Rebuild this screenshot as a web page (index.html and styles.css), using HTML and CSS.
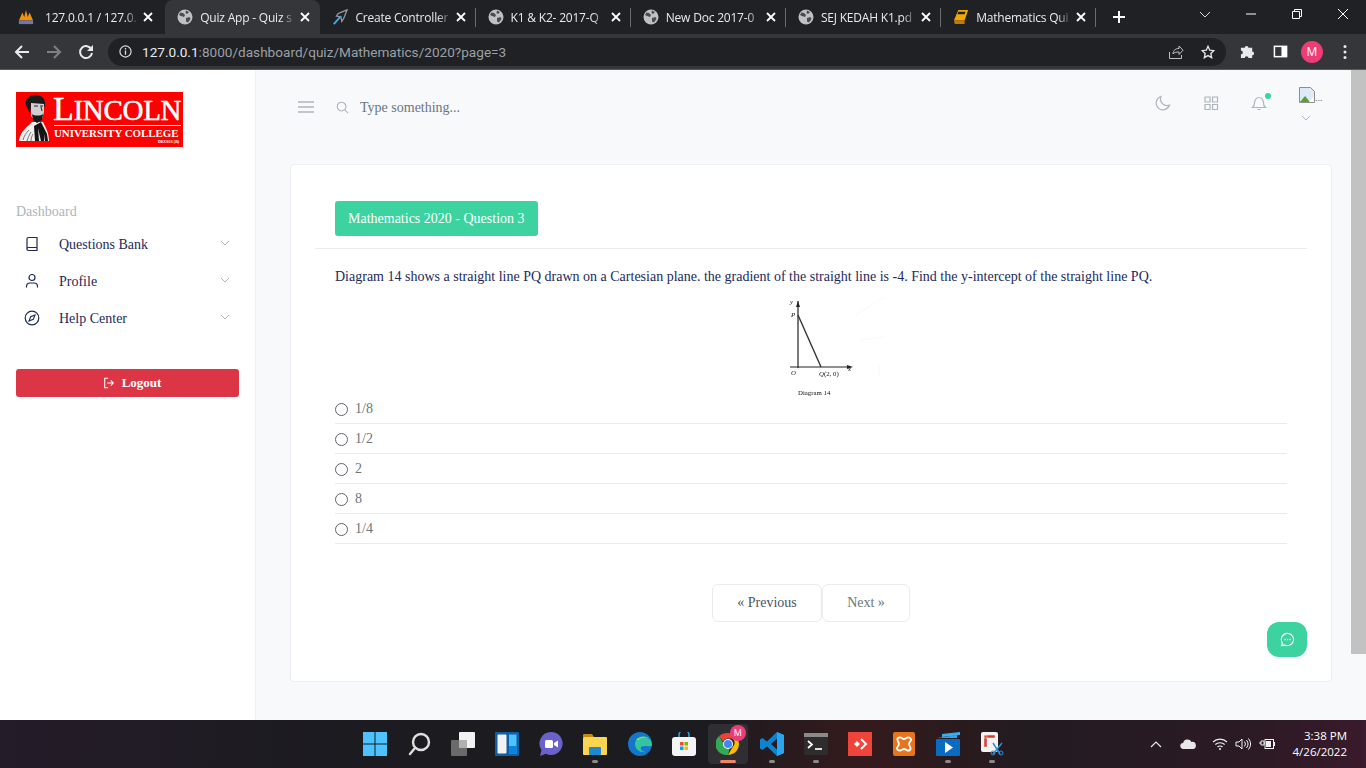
FILE: index.html
```html
<!DOCTYPE html>
<html lang="en">
<head>
	<title>Quiz App - Quiz</title>
	<meta charset="UTF-8">
	<link rel="stylesheet" href="styles.css">
</head>
<body>

<svg class="defs" width="0" height="0">
	<symbol id="globe" viewBox="0 0 16 16">
		<circle cx="8" cy="8" r="7.500" fill="#bdc1c6"/>
		<path d="M3.500 3.500l2.500.5 2 2-1 2-3-1-2-1zM9 9l3.500-1 1 2-2.500 3.500-2-1zM9 1.500l3 1.500-2 2-1.500-1z" fill="#4a4b4f"/>
	</symbol>
	<symbol id="close" viewBox="0 0 10 10">
		<path d="M1 1l8 8M9 1l-8 8" stroke="#fff" stroke-width="1.800" fill="none"/>
	</symbol>
	<symbol id="chev" viewBox="0 0 10 6">
		<path d="M1 1l4 4 4-4" stroke="#adb5bd" stroke-width="1" fill="none"/>
	</symbol>
</svg>

<header class="tabstrip">
	<div class="tab first">
		<svg class="tab-icon" viewBox="0 0 18 18"><path d="M1 13L5 4l2 5 2-8 2 8 2-5 4 9z" fill="#f29111"/><rect x="1" y="13" width="16" height="4" fill="#6c78af"/></svg>
		<span class="tab-title">127.0.0.1 / 127.0.</span>
		<svg class="tab-close"><use href="#close"/></svg>
	</div>
	<div class="tab active">
		<svg class="tab-icon"><use href="#globe"/></svg>
		<span class="tab-title">Quiz App - Quiz s</span>
		<svg class="tab-close"><use href="#close"/></svg>
	</div>
	<div class="tab sep">
		<svg class="tab-icon" viewBox="0 0 18 18"><path d="M17 1L7 5 5 8l5 1 1 5 2-3z" fill="none" stroke="#9aa0a6" stroke-width="1.400"/><path d="M10 8L2 17" stroke="#4aa8e8" stroke-width="2"/></svg>
		<span class="tab-title">Create Controller</span>
		<svg class="tab-close"><use href="#close"/></svg>
	</div>
	<div class="tab sep">
		<svg class="tab-icon"><use href="#globe"/></svg>
		<span class="tab-title">K1 &amp; K2- 2017-Q</span>
		<svg class="tab-close"><use href="#close"/></svg>
	</div>
	<div class="tab sep">
		<svg class="tab-icon"><use href="#globe"/></svg>
		<span class="tab-title">New Doc 2017-0</span>
		<svg class="tab-close"><use href="#close"/></svg>
	</div>
	<div class="tab sep">
		<svg class="tab-icon"><use href="#globe"/></svg>
		<span class="tab-title">SEJ KEDAH K1.pd</span>
		<svg class="tab-close"><use href="#close"/></svg>
	</div>
	<div class="tab sep">
		<svg class="tab-icon" viewBox="0 0 18 18"><path d="M6 1h11l-4 12H1z" fill="#f5a800"/><path d="M6 3h8l-1 3H5z" fill="#202124"/><path d="M1 13h12v4H2z" fill="#c47a00"/></svg>
		<span class="tab-title">Mathematics Qui</span>
		<svg class="tab-close"><use href="#close"/></svg>
	</div>
	<svg class="new-tab" viewBox="0 0 14 14"><path d="M7 1v12M1 7h12" stroke="#fff" stroke-width="2"/></svg>
	<div class="win-controls">
		<svg viewBox="0 0 12 12"><path d="M1 4l5 5 5-5" stroke="#dadce0" fill="none"/></svg>
		<svg viewBox="0 0 12 12"><path d="M1 6h10" stroke="#fff"/></svg>
		<svg viewBox="0 0 12 12"><path d="M1.500 3.500h7v7h-7zM3.500 3V1.500h7v7H9" stroke="#fff" fill="none"/></svg>
		<svg viewBox="0 0 12 12"><path d="M1 1l10 10M11 1L1 11" stroke="#fff" fill="none"/></svg>
	</div>
</header>

<div class="toolbar">
	<svg class="tool" viewBox="0 0 16 16"><path d="M15 8H2M8 2L2 8l6 6" stroke="#e8eaed" stroke-width="2" fill="none"/></svg>
	<svg class="tool" viewBox="0 0 16 16"><path d="M1 8h13M8 2l6 6-6 6" stroke="#7d8084" stroke-width="2" fill="none"/></svg>
	<svg class="tool" viewBox="0 0 16 16"><path d="M13.500 5.500A6 6 0 1 0 14 9" stroke="#e8eaed" stroke-width="2" fill="none"/><path d="M15 1v6H9z" fill="#e8eaed"/></svg>
	<div class="omnibox">
		<svg class="info" viewBox="0 0 14 14"><circle cx="7" cy="7" r="6" stroke="#dadce0" stroke-width="1.300" fill="none"/><path d="M7 6v4.500M7 3.300v1.500" stroke="#dadce0" stroke-width="1.400"/></svg>
		<span class="url"><b>127.0.0.1</b>:8000/dashboard/quiz/Mathematics/2020?page=3</span>
		<svg class="omni-icon" viewBox="0 0 16 16"><path d="M1.500 8v6.500h12V11M5 10c0-4 3-5.500 6-5.500V2l4 4.200-4 4.300V8c-3 0-5 .5-6 2z" stroke="#bdc1c6" fill="none"/></svg>
		<svg class="omni-star" viewBox="0 0 16 16"><path d="M8 1.500l2 4.500 4.700.5-3.500 3.200 1 4.800L8 12.100l-4.200 2.400 1-4.800L1.300 6.500 6 6z" stroke="#e8eaed" stroke-width="1.500" fill="none"/></svg>
	</div>
	<svg class="ext" viewBox="0 0 16 16"><path d="M1 4h4a2 2 0 0 1 4 0h4v4a2 2 0 0 1 0 4v3H9a2 2 0 0 0-4 0H1v-4a2 2 0 0 0 0-4z" fill="#e8eaed"/></svg>
	<svg class="panel" viewBox="0 0 16 16"><rect x="1.500" y="2.500" width="13" height="11" stroke="#fff" stroke-width="1.600" fill="none"/><rect x="9" y="2.500" width="5.500" height="11" fill="#fff"/></svg>
	<span class="avatar">M</span>
	<svg class="dots" viewBox="0 0 4 16"><circle cx="2" cy="2.500" r="1.500" fill="#e8eaed"/><circle cx="2" cy="8" r="1.500" fill="#e8eaed"/><circle cx="2" cy="13.500" r="1.500" fill="#e8eaed"/></svg>
</div>

<div class="viewport">
	<aside class="sidebar">
		<div class="logo">
			<svg class="bust" viewBox="0 0 32 48">
				<path d="M0 47C1 40 4 36 10 31l3-3h11c3 6 6 11 6 19z" fill="#f0f0f0"/>
				<path d="M4 46c1-4 3-7 6-10M8 47c1-3 2-6 4-9M12 47c0-3 1-5 2-7" stroke="#777" stroke-width="1" fill="none"/>
				<path d="M15 32l7-4 6 12 1 7H16z" fill="#141414"/>
				<path d="M19 34l3 13h-2zM25 40l1 7h-1z" fill="#ddd"/>
				<path d="M7 11C5 4 12 0 18 1c6 1 9 5 8 11l-2 3-12-3-1 8z" fill="#1a1a1a"/>
				<path d="M12 9l13 1v8l-2 7-7 2-4-5z" fill="#d0d0d0"/>
				<path d="M13 20c2 2 9 2 11 0l-1 6-5 3-4-3z" fill="#1a1a1a"/>
				<path d="M15 12h4M21 12h3M22 13l1 4" stroke="#222" stroke-width="1" fill="none"/>
			</svg>
			<div class="logo-text">
				<div class="logo-name">L<span>INCOLN</span></div>
				<div class="logo-sub">UNIVERSITY COLLEGE</div>
				<div class="logo-code">DKU016 (B)</div>
			</div>
		</div>

		<p class="side-label">Dashboard</p>
		<ul class="side-menu">
			<li>
				<svg class="side-icon" viewBox="0 0 16 16"><path d="M3 14V3a1.500 1.500 0 0 1 1.500-1.500H13v13H4.500A1.500 1.500 0 0 1 3 13a1.500 1.500 0 0 1 1.500-1.500H13" stroke="#1b2a5b" stroke-width="1.200" fill="none"/></svg>
				<span>Questions Bank</span>
				<svg class="side-chev"><use href="#chev"/></svg>
			</li>
			<li>
				<svg class="side-icon" viewBox="0 0 16 16"><circle cx="8" cy="4.500" r="3" stroke="#1b2a5b" stroke-width="1.200" fill="none"/><path d="M2.500 14.500v-1A3.500 3.500 0 0 1 6 10h4a3.500 3.500 0 0 1 3.500 3.500v1" stroke="#1b2a5b" stroke-width="1.200" fill="none"/></svg>
				<span>Profile</span>
				<svg class="side-chev"><use href="#chev"/></svg>
			</li>
			<li>
				<svg class="side-icon" viewBox="0 0 16 16"><circle cx="8" cy="8" r="6.800" stroke="#1b2a5b" stroke-width="1.200" fill="none"/><path d="M11 5L9.300 9.300 5 11l1.700-4.300z" stroke="#1b2a5b" stroke-width="1.100" fill="none"/></svg>
				<span>Help Center</span>
				<svg class="side-chev"><use href="#chev"/></svg>
			</li>
		</ul>

		<div class="logout">
			<svg viewBox="0 0 14 14"><path d="M6 1.500H2v11h4M5 7h7M9 4l3 3-3 3" stroke="#fff" stroke-width="1.200" fill="none"/></svg>
			<span>Logout</span>
		</div>
	</aside>

	<main class="content">
		<div class="topbar">
			<svg class="burger" viewBox="0 0 16 12"><path d="M0 1h16M0 6h16M0 11h16" stroke="#adb5bd" stroke-width="1.500"/></svg>
			<svg class="search" viewBox="0 0 14 14"><circle cx="6" cy="6" r="4.700" stroke="#adb5bd" stroke-width="1.200" fill="none"/><path d="M9.500 9.500L13 13" stroke="#adb5bd" stroke-width="1.200"/></svg>
			<span class="placeholder">Type something...</span>
			<div class="top-actions">
				<svg viewBox="0 0 16 16"><path d="M6 1.500a6.800 6.800 0 1 0 8.500 8.500A6.500 6.500 0 0 1 6 1.500z" stroke="#adb5bd" stroke-width="1.200" fill="none"/></svg>
				<svg viewBox="0 0 16 16"><path d="M2 2h5v5H2zM9.500 2h5v5h-5zM2 9.500h5v5H2zM9.500 9.500h5v5h-5z" stroke="#adb5bd" stroke-width="1.200" fill="none"/></svg>
				<div class="bell">
					<svg viewBox="0 0 16 16"><path d="M1.500 12.500c1.500-1 2-2 2-4.500 0-3 2-5.500 4.500-5.500s4.500 2.500 4.500 5.500c0 2.500.5 3.500 2 4.500zM6.500 14.500h3" stroke="#adb5bd" stroke-width="1.200" fill="none"/></svg>
					<span class="bell-dot"></span>
				</div>
				<div class="user">
					<div class="broken">
						<svg viewBox="0 0 16 16"><path d="M.5.500h11l4 4v11H.5z" fill="#dfe9f7" stroke="#8d8d8d"/><path d="M1 15l5-6 5 6z" fill="#5a9e3a"/><path d="M10 15l5-6v6z" fill="#fff"/></svg>
						<span>...</span>
					</div>
					<svg class="user-chev"><use href="#chev"/></svg>
				</div>
			</div>
		</div>

		<section class="card">
			<div class="card-head">
				<span class="quiz-title">Mathematics 2020 - Question 3</span>
			</div>
			<div class="card-body">
				<p class="question">Diagram 14 shows a straight line PQ drawn on a Cartesian plane. the gradient of the straight line is -4. Find the y-intercept of the straight line PQ.</p>
				<svg class="diagram" viewBox="0 0 150 99">
					<path d="M62 6v67M54 72h60" stroke="#222" stroke-width="1.200" fill="none"/>
					<path d="M62 20l23 52" stroke="#333" stroke-width="1.400" fill="none"/>
					<path d="M60 12l2-6 2 6zM111 70l6 2-6 2z" fill="#222"/>
					<path d="M120 20l28-18M125 45l24-3M143 70v12" stroke="#f6f6f6" stroke-width=".8" fill="none"/>
					<text x="54" y="9" class="dg i">y</text>
					<text x="55" y="22" class="dg i">P</text>
					<text x="55" y="80" class="dg i">O</text>
					<text x="83" y="81" class="dg"><tspan class="i">Q</tspan>(2, 0)</text>
					<text x="112" y="76" class="dg i">x</text>
					<text x="62" y="100" class="dg">Diagram 14</text>
				</svg>
				<ul class="options">
					<li><span class="radio"></span>1/8</li>
					<li><span class="radio"></span>1/2</li>
					<li><span class="radio"></span>2</li>
					<li><span class="radio"></span>8</li>
					<li><span class="radio"></span>1/4</li>
				</ul>
				<nav class="pager">
					<a class="prev">&laquo; Previous</a>
					<a class="next">Next &raquo;</a>
				</nav>
			</div>
			<div class="fab">
				<svg viewBox="0 0 16 16"><path d="M8 1.500a6.500 6.500 0 1 1-3 12.300L1.700 14.600l.8-3A6.500 6.500 0 0 1 8 1.500z" stroke="#fff" stroke-width="1.200" fill="none"/><path d="M4.800 8h1.200M7.400 8h1.200M10 8h1.200" stroke="#fff" stroke-width="1.400"/></svg>
			</div>
		</section>
	</main>

	<div class="scrollbar"><div class="thumb"></div></div>
</div>

<footer class="taskbar">
	<div class="task-icons">
		<svg viewBox="0 0 24 24"><path d="M0 0h11.500v11.500H0zM12.500 0H24v11.500H12.500zM0 12.500h11.500V24H0zM12.500 12.500H24V24H12.500z" fill="#4cc2ff"/></svg>
		<svg viewBox="0 0 24 24"><circle cx="14" cy="10" r="8" stroke="#e0e0e0" stroke-width="2.400" fill="none"/><path d="M8 16l-5 6" stroke="#e0e0e0" stroke-width="2.400" stroke-linecap="round"/></svg>
		<svg viewBox="0 0 24 24"><rect x="0" y="8" width="16" height="16" rx="1" fill="#6a6a6a"/><rect x="8" y="0" width="16" height="16" rx="1" fill="#f2f2f2"/><rect x="8" y="8" width="8" height="8" fill="#b0b0b0"/></svg>
		<svg viewBox="0 0 24 24"><rect width="24" height="24" rx="1" fill="#0f5fa8"/><rect x="2.500" y="2.500" width="9" height="19" rx="1" fill="#f2f2f2"/><rect x="14" y="2.500" width="7.500" height="19" fill="#4cc2ff"/><rect x="14" y="14" width="7.500" height="7.500" fill="#0a84d6"/></svg>
		<svg viewBox="0 0 24 24"><path d="M12 0a11.500 11.500 0 1 1-5 21.800L1 24l1.500-6A11.500 11.500 0 0 1 12 0z" fill="#6b62c9"/><rect x="6" y="8" width="8" height="8" rx="1.500" fill="#fff"/><path d="M15 11l4-2.500v7L15 13z" fill="#fff"/></svg>
		<div class="task-app dot">
			<svg viewBox="0 0 24 24"><path d="M0 3a1 1 0 0 1 1-1h8l2 3h-11z" fill="#c08a18"/><rect y="5" width="24" height="18" rx="1" fill="#fcd452"/><rect x="6" y="15" width="12" height="8" rx="1" fill="#1e88d0"/></svg>
		</div>
		<svg viewBox="0 0 24 24"><circle cx="12" cy="12" r="12" fill="#1476c8"/><path d="M24 13c0-6-5-8-9-8-5 0-8 3-8 7 0 6 6 9 11 8-4 0-6-3-5-5 1-1 3-1 5-1 3 0 6 1 6-1z" fill="#35c4a0"/><path d="M8 8c3-4 10-5 14-1-3-2-9-2-11 1z" fill="#8ddc5a"/></svg>
		<svg viewBox="0 0 24 24"><path d="M7 5V3a3 3 0 0 1 10 0v2" stroke="#2aa8e0" stroke-width="1.500" fill="none"/><rect y="5" width="24" height="19" rx="3" fill="#f5f5f5"/><path d="M8 10h3.500v3.500H8z" fill="#f25022"/><path d="M12.500 10H16v3.500h-3.500z" fill="#7fba00"/><path d="M8 14.500h3.500V18H8z" fill="#00a4ef"/><path d="M12.500 14.500H16V18h-3.500z" fill="#ffb900"/></svg>
		<div class="task-app active-app">
			<svg viewBox="0 0 24 24"><path d="M12 1a11 11 0 0 1 9.500 5.500H12a5.500 5.500 0 0 0-5 3L3 4a11 11 0 0 1 9-3z" fill="#ea4335"/><path d="M21.500 6.500A11 11 0 0 1 12 23l4.700-8a5.500 5.500 0 0 0 0-8.500z" fill="#fbbc04"/><path d="M12 23A11 11 0 0 1 3 4l4.700 8a5.500 5.500 0 0 0 6 4z" fill="#34a853"/><circle cx="12" cy="12" r="5" fill="#fff"/><circle cx="12" cy="12" r="4" fill="#4285f4"/></svg>
			<span class="task-badge">M</span>
		</div>
		<div class="task-app dot">
			<svg viewBox="0 0 24 24"><path d="M17 0l7 3v18l-7 3L7 14.500 2.500 18 0 16.500V7.500L2.500 6 7 9.500zM17 6.500L11 12l6 5.500z" fill="#0a84d0"/><path d="M17 0l7 3v18l-7 3z" fill="#2aa4ee"/></svg>
		</div>
		<div class="task-app dot">
			<svg viewBox="0 0 24 24"><rect y="1" width="24" height="22" rx="2" fill="#2d2d2d"/><rect y="1" width="24" height="4" fill="#8a8a8a"/><path d="M4 9l4 3.500L4 16" stroke="#fff" stroke-width="1.700" fill="none"/><path d="M11 17h7" stroke="#fff" stroke-width="1.700"/></svg>
		</div>
		<svg viewBox="0 0 24 24"><rect width="24" height="24" fill="#ef443b"/><path d="M7 9l3 3-3 3-3-3z" fill="#fff" transform="translate(2 0)"/><path d="M13 7l5 5-5 5" stroke="#fff" stroke-width="2" fill="none"/></svg>
		<svg viewBox="0 0 24 24"><rect x="1" width="22" height="24" rx="2" fill="#e8741c"/><path d="M6 6c3-2 4 1 6 1s3-3 6-1-1 4-1 6 3 4 1 6-4-1-6-1-3 3-6 1 1-4 1-6-3-4-1-6z" fill="none" stroke="#fff" stroke-width="1.800"/></svg>
		<div class="task-app dot">
			<svg viewBox="0 0 24 24"><path d="M1 6l20-3v3z" fill="#2aa4ee"/><path d="M6 2l18-2v3L6 5z" fill="#36b0f0"/><rect y="7" width="24" height="17" rx="1" fill="#0a6cc0"/><path d="M9 10l8 5.500L9 21z" fill="#fff"/></svg>
		</div>
		<div class="task-app dot">
			<svg viewBox="0 0 24 24"><rect x="1" width="17" height="20" rx="2" fill="#f2f2f2"/><path d="M4 3h11v3H4zM4 3h3v12H4z" fill="#d93a2b" stroke="#f2f2f2" stroke-width=".5"/><path d="M13 11l7 11M22 11l-9 11" stroke="#2f8fd8" stroke-width="1.500"/><circle cx="13" cy="21" r="2" fill="none" stroke="#2f8fd8"/><circle cx="21" cy="21" r="2" fill="none" stroke="#2f8fd8"/></svg>
		</div>
	</div>
	<div class="tray">
		<svg class="tray-chev" viewBox="0 0 12 8"><path d="M1 7l5-5 5 5" stroke="#e8e8e8" stroke-width="1.200" fill="none"/></svg>
		<svg class="tray-cloud" viewBox="0 0 16 10"><path d="M3.500 10a3 3 0 0 1-.4-6A4.500 4.500 0 0 1 11.500 3 3.500 3.500 0 0 1 13 10z" fill="#e8e8e8"/></svg>
		<svg class="tray-wifi" viewBox="0 0 16 12"><path d="M1 4a10 10 0 0 1 14 0M3.300 6.500a7 7 0 0 1 9.400 0M5.500 9a3.500 3.500 0 0 1 5 0" stroke="#f0f0f0" stroke-width="1.100" fill="none"/><circle cx="8" cy="11" r="1" fill="#f0f0f0"/></svg>
		<svg class="tray-vol" viewBox="0 0 16 12"><path d="M1 4h3l3-3v10L4 8H1z" stroke="#f0f0f0" fill="none"/><path d="M9.500 3.500a4 4 0 0 1 0 5M11.500 2a6.500 6.500 0 0 1 0 8M13.500.500a9 9 0 0 1 0 11" stroke="#f0f0f0" fill="none"/></svg>
		<svg class="tray-batt" viewBox="0 0 16 12"><path d="M0 5h2M2 3h3v4H2zM5 5h1" stroke="#f0f0f0" fill="none"/><rect x="6" y="1.500" width="8.500" height="9" stroke="#f0f0f0" fill="none"/><rect x="7" y="3" width="5" height="6" fill="#f0f0f0"/><rect x="14.500" y="4" width="1.500" height="4" fill="#f0f0f0"/></svg>
		<div class="clock">
			<div>3:38 PM</div>
			<div>4/26/2022</div>
		</div>
	</div>
</footer>

</body>
</html>
```

FILE: styles.css
```css
* {
	box-sizing: border-box;
}

body {
	margin: 0;
	width: 1366px;
	height: 768px;
	overflow: hidden;
	display: flex;
	flex-direction: column;
	font-family: "Liberation Serif", serif;
	font-size: 14px;
	color: #1b2a5b;
	background-color: #f8f9fb;
}

.defs {
	position: absolute;
}

/* browser tabs */
.tabstrip {
	flex: 0 0 34px;
	display: flex;
	align-items: center;
	padding-left: 10px;
	background-color: #202124;
	font-family: "Open Sans", sans-serif;
	font-size: 12px;
	color: #e8eaed;
}

.tab {
	flex: 0 0 155.200px;
	min-width: 0;
	height: 34px;
	display: flex;
	align-items: center;
	padding: 0 10px 0 12px;
	position: relative;
}

.tab.first {
	padding: 0 12px 0 8px;
}

.tab.first .tab-title {
	margin-left: 11px;
}

.tab.active {
	background-color: #35363a;
	border-radius: 8px 8px 0 0;
}

.tab.sep::after {
	content: "";
	position: absolute;
	right: 0;
	top: 8px;
	width: 1px;
	height: 19px;
	background-color: #6a6b6e;
}

.tab-icon {
	flex: 0 0 16px;
	width: 16px;
	height: 16px;
}

.tab-title {
	flex: 1;
	min-width: 0;
	margin-left: 7px;
	white-space: nowrap;
	letter-spacing: -0.200px;
	-webkit-mask-image: linear-gradient(to right, #000 85%, transparent);
	mask-image: linear-gradient(to right, #000 85%, transparent);
}

.tab-close {
	flex: 0 0 10px;
	width: 10px;
	height: 10px;
	margin-left: 4px;
}

.new-tab {
	width: 14px;
	height: 14px;
	margin-left: 16px;
}

.win-controls {
	margin-left: auto;
	margin-right: 17px;
	display: flex;
	gap: 34px;
	margin-top: -6px;
}

.win-controls svg {
	width: 12px;
	height: 12px;
}

/* browser toolbar */
.toolbar {
	flex: 0 0 36px;
	display: flex;
	align-items: center;
	padding-left: 14px;
	background-color: #35363a;
	border-bottom: 1px solid #5a5a5d;
}

.tool {
	width: 16px;
	height: 16px;
	margin-right: 16px;
}

.omnibox {
	flex: 0 0 1118px;
	height: 28px;
	margin-left: -2px;
	border-radius: 14px;
	background-color: #202124;
	display: flex;
	align-items: center;
	padding: 0 11px;
}

.info {
	width: 13px;
	height: 13px;
}

.url {
	margin-left: 10px;
	flex: 1;
	font-family: "Roboto", sans-serif;
	font-size: 13.600px;
	color: #9aa0a6;
}

.url b {
	font-weight: 400;
	color: #e8eaed;
}

.omni-icon {
	width: 16px;
	height: 16px;
}

.omni-star {
	width: 14px;
	height: 14px;
	margin-left: 17px;
}

.ext {
	width: 15px;
	height: 15px;
	margin-left: 14px;
}

.panel {
	width: 15px;
	height: 15px;
	margin-left: 17.500px;
}

.avatar {
	width: 22px;
	height: 22px;
	margin-left: 13.500px;
	border-radius: 50%;
	background-color: #ee3c77;
	color: #fff;
	font-family: "Open Sans", sans-serif;
	font-size: 12px;
	line-height: 22px;
	text-align: center;
}

.dots {
	width: 4px;
	height: 16px;
	margin-left: 20px;
}

/* page area */
.viewport {
	flex: 1;
	display: flex;
	min-height: 0;
}

.sidebar {
	flex: 0 0 256px;
	padding: 22px 16px 0;
	background-color: #fff;
	border-right: 1px solid #eef0f3;
}

.logo {
	width: 167px;
	height: 55px;
	background-color: #f00;
	display: flex;
	padding: 2px 2px 0 3px;
}

.bust {
	flex: 0 0 32px;
	width: 32px;
	height: 48px;
}

.logo-text {
	margin-left: 2px;
	color: #fff;
}

.logo-name {
	font-size: 34px;
	line-height: 30px;
	font-weight: 400;
	letter-spacing: -0.300px;
	white-space: nowrap;
	-webkit-text-stroke: 0.500px #fff;
}

.logo-name span {
	font-size: 29px;
}

.logo-sub {
	border-top: 1px solid #fff;
	margin-left: 1px;
	font-size: 10.900px;
	line-height: 12px;
	font-weight: 700;
	white-space: nowrap;
	padding-top: 1px;
}

.logo-code {
	font-size: 4px;
	line-height: 5px;
	font-weight: 700;
	text-align: right;
	padding-right: 2px;
}

.side-label {
	margin: 57px 0 0;
	line-height: 16px;
	color: #adb5bd;
}

.side-menu {
	list-style: none;
	margin: 6px 0 0;
	padding: 0;
}

.side-menu li {
	height: 37px;
	display: flex;
	align-items: center;
	padding-left: 8px;
}

.side-icon {
	width: 16px;
	height: 16px;
	margin-top: -2px;
}

.side-menu span {
	margin-left: 19px;
	flex: 1;
}

.side-chev {
	width: 10px;
	height: 6px;
	margin-right: 9px;
	margin-top: -3px;
}

.logout {
	margin-top: 32px;
	width: 223px;
	height: 28px;
	padding-left: 9px;
	border-radius: 3px;
	background-color: #dc3545;
	color: #fff;
	font-size: 13px;
	font-weight: 700;
	display: flex;
	align-items: center;
	justify-content: center;
	gap: 7px;
}

.logout svg {
	width: 12px;
	height: 12px;
}

.content {
	flex: 1;
	padding: 0 19px 0 34px;
}

.topbar {
	height: 94px;
	display: flex;
	align-items: center;
	padding: 0 0 20px 8px;
}

.burger {
	width: 16px;
	height: 12px;
}

.search {
	width: 13px;
	height: 13px;
	margin-left: 22px;
}

.placeholder {
	margin-left: 11px;
	padding-top: 2px;
	color: #6c757d;
}

.top-actions {
	margin-left: auto;
	margin-top: -8px;
	display: flex;
	align-items: center;
	gap: 32px;
}

.top-actions svg {
	width: 16px;
	height: 16px;
}

.bell {
	position: relative;
	display: flex;
}

.bell-dot {
	position: absolute;
	top: -2px;
	right: -4px;
	width: 6px;
	height: 6px;
	border-radius: 50%;
	background-color: #3cd3a0;
}

.user {
	width: 33px;
	margin-top: 2px;
}

.broken {
	display: flex;
	align-items: flex-end;
	font-size: 10px;
	line-height: 10px;
	color: #6c757d;
}

.user .user-chev {
	display: block;
	width: 10px;
	height: 6px;
	margin: 12px 0 0 2px;
}

.card {
	position: relative;
	height: 518px;
	padding: 36px 24px 0;
	background-color: #fff;
	border: 1px solid #eceef1;
	border-radius: 4px;
}

.card-head {
	height: 48px;
	padding-left: 20px;
	border-bottom: 1px solid #e9ecef;
}

.quiz-title {
	display: inline-block;
	height: 35px;
	padding: 0 13px;
	border-radius: 3px;
	background-color: #3cd3a0;
	color: #fff;
	font-size: 14px;
	line-height: 35px;
}

.card-body {
	padding: 0 20px;
}

.question {
	margin: 18px 0 8px;
	line-height: 20px;
}

.diagram {
	display: block;
	width: 150px;
	height: 99px;
	margin: 0 auto;
	overflow: visible;
	filter: blur(0.450px);
}

.dg {
	font-size: 6.800px;
	fill: #111;
}

.i {
	font-style: italic;
}

.options {
	list-style: none;
	margin: 0;
	padding: 0;
}

.options li {
	height: 30px;
	display: flex;
	align-items: center;
	border-bottom: 1px solid #e9ecef;
	color: #6c757d;
}

.radio {
	width: 13px;
	height: 13px;
	margin-top: 1px;
	margin-right: 7px;
	border: 1px solid #5f6368;
	border-radius: 50%;
}

.pager {
	margin-top: 40px;
	display: flex;
	justify-content: center;
}

.pager a {
	height: 38px;
	display: flex;
	align-items: center;
	justify-content: center;
	background-color: #fff;
	border: 1px solid #e9ecef;
	border-radius: 6px;
}

.prev {
	width: 110px;
	color: #4a5568;
}

.next {
	width: 88px;
	color: #6c757d;
}

.fab {
	position: absolute;
	right: 24px;
	bottom: 24px;
	width: 40px;
	height: 35px;
	border-radius: 12px;
	background-color: #3cd3a0;
	display: flex;
	align-items: center;
	justify-content: center;
}

.fab svg {
	width: 15px;
	height: 15px;
}

.scrollbar {
	flex: 0 0 15px;
}

.thumb {
	height: 584px;
	background-color: #c2c2c2;
}

/* windows taskbar */
.taskbar {
	flex: 0 0 48px;
	display: flex;
	align-items: center;
	position: relative;
	background: linear-gradient(to right, #241c28, #1b1b20 28%, #1c1b20 52%, #351a1c 63%, #221b20 75%, #2c1a25 92%, #3a1a2c);
}

.task-icons {
	position: absolute;
	left: 363px;
	top: 12px;
	display: flex;
	gap: 20.100px;
}

.task-icons > svg,
.task-app svg {
	display: block;
	width: 24px;
	height: 24px;
}

.task-app {
	position: relative;
	width: 24px;
	height: 24px;
}

.task-app.dot::after {
	content: "";
	position: absolute;
	left: 9px;
	top: 28px;
	width: 6px;
	height: 3px;
	border-radius: 2px;
	background-color: #8a8a8a;
}

.active-app::before {
	content: "";
	position: absolute;
	left: -8px;
	top: -8px;
	width: 40px;
	height: 40px;
	border-radius: 4px;
	background-color: #2e2e33;
}

.active-app::after {
	content: "";
	position: absolute;
	left: 4px;
	top: 28px;
	width: 16px;
	height: 3px;
	border-radius: 2px;
	background-color: #f2836b;
}

.active-app svg {
	position: relative;
}

.task-badge {
	position: absolute;
	top: -7px;
	right: -6px;
	width: 16px;
	height: 16px;
	border-radius: 50%;
	background-color: #ee3c77;
	color: #fff;
	font-family: "Open Sans", sans-serif;
	font-size: 9px;
	line-height: 16px;
	text-align: center;
}

.tray {
	margin-left: auto;
	margin-right: 19px;
	display: flex;
	align-items: center;
	color: #fff;
}

.tray-chev {
	width: 12px;
	height: 8px;
}

.tray-cloud {
	width: 16px;
	height: 10px;
	margin-left: 18px;
}

.tray-wifi {
	width: 16px;
	height: 12px;
	margin-left: 16px;
}

.tray-vol {
	width: 16px;
	height: 12px;
	margin-left: 7px;
}

.tray-batt {
	width: 16px;
	height: 12px;
	margin-left: 8px;
}

.clock {
	margin-left: 18px;
	text-align: right;
	font-family: "Open Sans", sans-serif;
	font-size: 11.500px;
	line-height: 16px;
}
```
